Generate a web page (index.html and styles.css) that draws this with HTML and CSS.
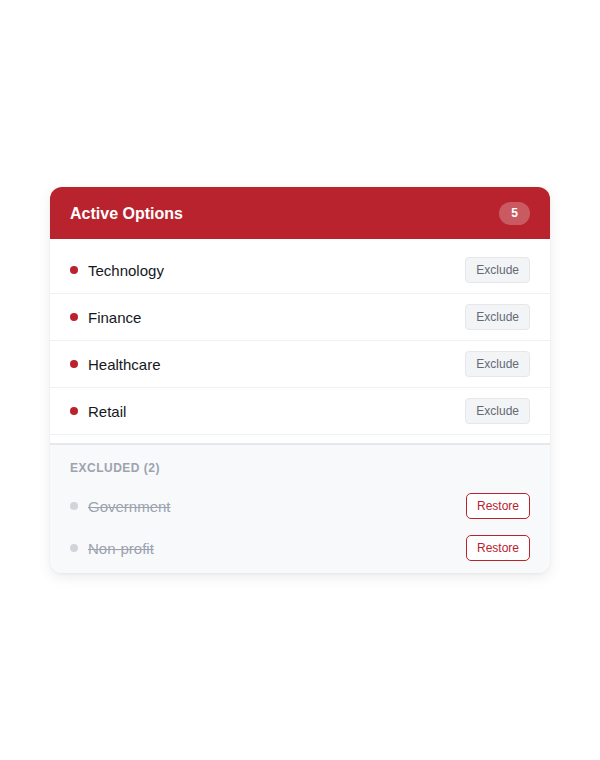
FILE: index.html
```html
<!DOCTYPE html>
<html lang="en">
<head>
    <meta charset="UTF-8">
    <meta name="viewport" content="width=device-width, initial-scale=1.0">
    <link rel="stylesheet" href="styles.css">
    <title>Active Options</title>
</head>
<body>
    <div class="card">
        <div class="card-header">
            <h2>Active Options</h2>
            <span class="badge">5</span>
        </div>
        <ul class="active-list">
            <li class="option">
                <span class="dot"></span>
                <span class="label">Technology</span>
                <button type="button" class="btn-exclude">Exclude</button>
            </li>
            <li class="option">
                <span class="dot"></span>
                <span class="label">Finance</span>
                <button type="button" class="btn-exclude">Exclude</button>
            </li>
            <li class="option">
                <span class="dot"></span>
                <span class="label">Healthcare</span>
                <button type="button" class="btn-exclude">Exclude</button>
            </li>
            <li class="option">
                <span class="dot"></span>
                <span class="label">Retail</span>
                <button type="button" class="btn-exclude">Exclude</button>
            </li>
        </ul>
        <div class="excluded">
            <p class="excluded-title">Excluded (2)</p>
            <ul class="excluded-list">
                <li class="option muted">
                    <span class="dot"></span>
                    <span class="label">Government</span>
                    <button type="button" class="btn-restore">Restore</button>
                </li>
                <li class="option muted">
                    <span class="dot"></span>
                    <span class="label">Non-profit</span>
                    <button type="button" class="btn-restore">Restore</button>
                </li>
            </ul>
        </div>
    </div>
</body>
</html>
```

FILE: styles.css
```css
* {
    margin: 0;
    padding: 0;
    box-sizing: border-box;
    font-family: "Liberation Sans", Arial, sans-serif;
}
body {
    background: #ffffff;
    min-height: 100vh;
    display: flex;
    align-items: center;
    justify-content: center;
}
.card {
    width: 500px;
    background: #ffffff;
    border-radius: 12px;
    overflow: hidden;
    box-shadow: 0 4px 14px rgba(0, 0, 0, 0.08), 0 1px 3px rgba(0, 0, 0, 0.05);
}
.card-header {
    background: #b8232e;
    height: 52px;
    padding: 1px 20px 0;
    display: flex;
    align-items: center;
    justify-content: space-between;
}
.card-header h2 {
    color: #fff;
    font-size: 16px;
    font-weight: 700;
}
.badge {
    background: rgba(255, 255, 255, 0.25);
    color: #fff;
    font-size: 12px;
    font-weight: 700;
    line-height: 23px;
    height: 23px;
    padding: 0 12px;
    border-radius: 12px;
}
ul {
    list-style: none;
}
.active-list {
    padding: 8px 0;
}
.option {
    display: flex;
    align-items: center;
    padding: 0 20px;
}
.active-list .option {
    height: 47px;
    border-bottom: 1px solid #f0f1f3;
}
.dot {
    width: 8px;
    height: 8px;
    border-radius: 50%;
    background: #b8232e;
    margin-right: 10px;
}
.label {
    flex: 1;
    font-size: 15px;
    font-weight: 500;
    color: #15181d;
}
button {
    font-size: 12px;
    line-height: 14px;
    padding: 5px 10px;
    border-radius: 4px;
    cursor: pointer;
}
.btn-exclude {
    background: #f3f4f6;
    color: #636a77;
    border: 1px solid #e5e7eb;
}
.btn-restore {
    background: #ffffff;
    color: #b8232e;
    border: 1px solid #b8232e;
    border-radius: 5px;
}
.excluded {
    background: #f8f9fb;
    border-top: 2px solid #e5e7eb;
    padding: 16px 0 6px;
}
.excluded-title {
    padding: 0 20px;
    font-size: 12px;
    line-height: 15px;
    font-weight: 700;
    letter-spacing: 0.5px;
    text-transform: uppercase;
    color: #9ca3af;
    margin-bottom: 11px;
}
.excluded-list {
    display: flex;
    flex-direction: column;
    gap: 4px;
}
.excluded-list .option {
    padding: 6px 20px;
}
.muted .dot {
    background: #d1d5db;
}
.muted .label {
    color: #9ca3af;
    text-decoration: line-through;
    font-weight: 400;
}
```
